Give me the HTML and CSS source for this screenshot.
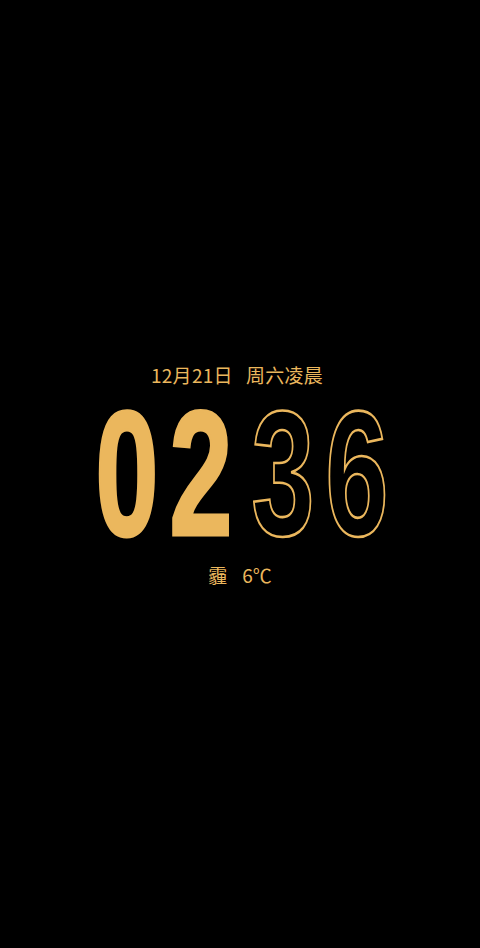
FILE: index.html
```html
<!DOCTYPE html>
<html lang="zh">
<head>
<meta charset="utf-8">
<link rel="stylesheet" href="styles.css">
</head>
<body>
<div class="screen">
  <div class="date"><span>12月21日</span><span>周六凌晨</span></div>
  <div class="time">
    <div class="pair">
      <span class="d solid">0</span>
      <span class="d solid">2</span>
    </div>
    <div class="pair">
      <span class="d outline">3</span>
      <span class="d outline">6</span>
    </div>
  </div>
  <div class="weather"><span>霾</span><span>6℃</span></div>
</div>
</body>
</html>
```
FILE: styles.css
```css
html, body {
  margin: 0;
  padding: 0;
  background: #000;
}
.screen {
  width: 480px;
  height: 948px;
  display: flex;
  flex-direction: column;
  align-items: center;
  padding-top: 362px;
  box-sizing: border-box;
  color: #ebb75d;
  font-family: "Noto Sans CJK SC", "Noto Sans", sans-serif;
}
.date {
  display: flex;
  gap: 13px;
  font-size: 19px;
  line-height: 26px;
  letter-spacing: 0.3px;
  margin-right: 6px;
}
.time {
  display: flex;
  gap: 24px;
  margin-top: 20px;
  margin-left: 4px;
}
.pair {
  display: flex;
  gap: 16px;
}
.d {
  width: 58px;
  height: 132px;
  display: flex;
  justify-content: center;
  align-items: center;
  font-family: "Liberation Sans", Arial, sans-serif;
  font-weight: bold;
  font-size: 178px;
  line-height: 132px;
  transform: scaleX(0.64);
}
.solid {
  color: #ebb75d;
  -webkit-text-stroke: 3px #ebb75d;
}
.outline {
  color: transparent;
  -webkit-text-stroke: 2.6px #ebb75d;
}
.weather {
  display: flex;
  gap: 15px;
  font-size: 19px;
  line-height: 26px;
  margin-top: 22px;
}
```
